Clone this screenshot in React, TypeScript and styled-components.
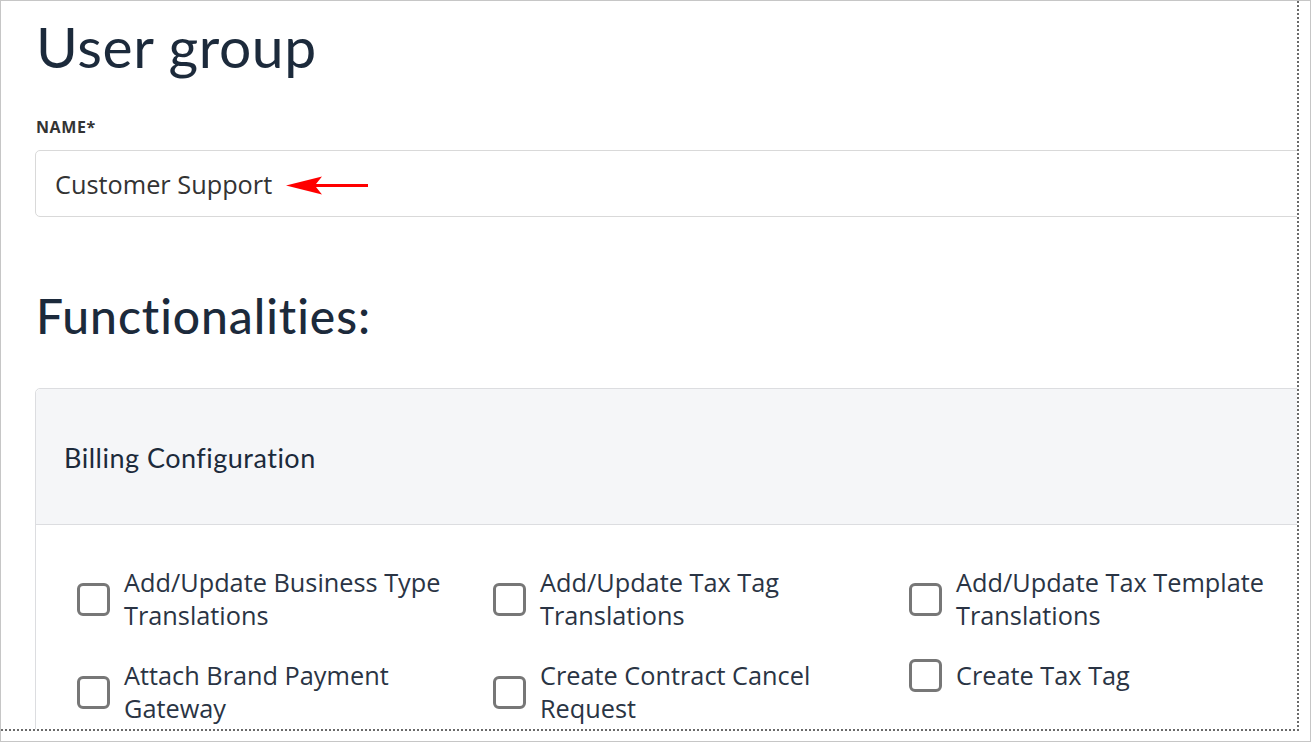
import React from "react";
import styled, { createGlobalStyle } from "styled-components";

const GlobalStyle = createGlobalStyle`
  html, body { margin: 0; padding: 0; background: #ffffff; }
  * { box-sizing: border-box; }
`;

const Frame = styled.div`
  width: 1311px;
  height: 742px;
  border: 1px solid #c6c6c6;
  background: #ffffff;
  padding: 0 11px 10px 0;
`;

const Clip = styled.div`
  position: relative;
  width: 100%;
  height: 100%;
  overflow: hidden;
  border-right: 2px dotted #6a6a6a;
  border-bottom: 2px dotted #6a6a6a;
`;

const Page = styled.main`
  padding: 5px 0 0 34px;
  width: 1400px;
`;

const Title = styled.h1`
  margin: 0 0 0 1px;
  font-family: "Lato", "Noto Sans", sans-serif;
  font-weight: 400;
  font-size: 57px;
  line-height: 80px;
  letter-spacing: 0.6px;
  color: #1c2a3b;
`;

const FieldLabel = styled.label`
  display: block;
  margin: 31px 0 0 1px;
  font-family: "Open Sans", "Liberation Sans", sans-serif;
  font-weight: 700;
  font-size: 16px;
  line-height: 20px;
  letter-spacing: 0.6px;
  color: #333333;
`;

const InputRow = styled.div`
  position: relative;
  margin-top: 13px;
  width: 1300px;
  height: 67px;
  border: 1px solid #d9d9d9;
  border-radius: 5px;
  display: flex;
  align-items: center;
  padding-left: 19px;
`;

const InputText = styled.span`
  font-family: "Open Sans", "Liberation Sans", sans-serif;
  font-size: 25.3px;
  color: #333333;
`;

const Arrow = styled.svg`
  position: absolute;
  left: 250px;
  top: 24px;
`;

const SectionTitle = styled.h2`
  margin: 69px 0 0 1px;
  font-family: "Lato", "Noto Sans", sans-serif;
  font-weight: 500;
  font-size: 48px;
  line-height: 60px;
  letter-spacing: 0.95px;
  color: #1c2a3b;
`;

const Card = styled.section`
  margin-top: 42px;
  width: 1300px;
  border: 1px solid #dcdde0;
  border-radius: 5px;
`;

const CardHeader = styled.header`
  height: 136px;
  background: #f5f6f8;
  border-bottom: 1px solid #dcdde0;
  display: flex;
  align-items: center;
  padding: 2px 0 0 28px;
  font-family: "Lato", "Noto Sans", sans-serif;
  font-size: 27px;
  letter-spacing: 0.5px;
  color: #1c2a3b;
  border-radius: 5px 5px 0 0;
`;

const CardBody = styled.div`
  display: grid;
  grid-template-columns: repeat(3, 416px);
  align-items: start;
  row-gap: 27px;
  padding: 41px 0 80px 41px;
`;

const Option = styled.label`
  display: flex;
  align-items: center;
  gap: 14px;
`;

const Box = styled.span`
  flex: 0 0 auto;
  width: 33px;
  height: 33px;
  border: 3px solid #777777;
  border-radius: 6px;
  background: #ffffff;
`;

const OptionText = styled.span`
  width: 335px;
  font-family: "Open Sans", "Liberation Sans", sans-serif;
  font-size: 25.3px;
  line-height: 33px;
  color: #2a3444;
`;

const options = [
  "Add/Update Business Type Translations",
  "Add/Update Tax Tag Translations",
  "Add/Update Tax Template Translations",
  "Attach Brand Payment Gateway",
  "Create Contract Cancel Request",
  "Create Tax Tag",
];

export default function App() {
  return (
    <>
      <GlobalStyle />
      <Frame>
        <Clip>
          <Page>
            <Title>User group</Title>
            <FieldLabel>NAME*</FieldLabel>
            <InputRow>
              <InputText>Customer Support</InputText>
              <Arrow width="84" height="22" viewBox="0 0 84 22">
                <path d="M0 10.5 L36 1.5 L30 9 L82 9 L82 12 L30 12 L36 19.5 Z" fill="#ff0000" />
              </Arrow>
            </InputRow>
            <SectionTitle>Functionalities:</SectionTitle>
            <Card>
              <CardHeader>Billing Configuration</CardHeader>
              <CardBody>
                {options.map((o) => (
                  <Option key={o}>
                    <Box />
                    <OptionText>{o}</OptionText>
                  </Option>
                ))}
              </CardBody>
            </Card>
          </Page>
        </Clip>
      </Frame>
    </>
  );
}
